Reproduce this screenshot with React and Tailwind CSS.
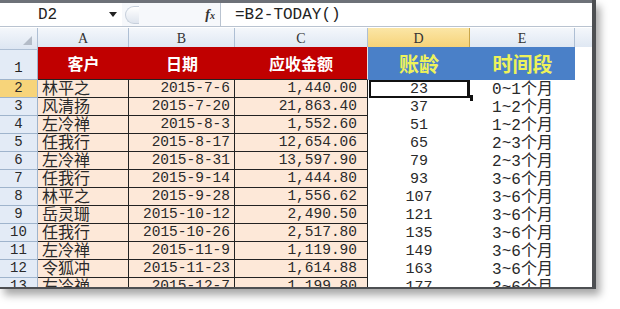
import React from "react";

const cols = "grid grid-cols-[38px_91px_106px_133px_102px_105px_1fr]";
const mono = { fontFamily: '"Liberation Mono", "Noto Sans CJK SC", monospace' };

const rows = [
	["2", "林平之", "2015-7-6", "1,440.00", "23", "0~1个月"],
	["3", "风清扬", "2015-7-20", "21,863.40", "37", "1~2个月"],
	["4", "左冷禅", "2015-8-3", "1,552.60", "51", "1~2个月"],
	["5", "任我行", "2015-8-17", "12,654.06", "65", "2~3个月"],
	["6", "左冷禅", "2015-8-31", "13,597.90", "79", "2~3个月"],
	["7", "任我行", "2015-9-14", "1,444.80", "93", "3~6个月"],
	["8", "林平之", "2015-9-28", "1,556.62", "107", "3~6个月"],
	["9", "岳灵珊", "2015-10-12", "2,490.50", "121", "3~6个月"],
	["10", "任我行", "2015-10-26", "2,517.80", "135", "3~6个月"],
	["11", "左冷禅", "2015-11-9", "1,119.90", "149", "3~6个月"],
	["12", "令狐冲", "2015-11-23", "1,614.88", "163", "3~6个月"],
	["13", "左冷禅", "2015-12-7", "1,199.80", "177", "3~6个月"],
];

const colHead = "flex items-center justify-center border-r border-b border-[#aebfd4] bg-gradient-to-b from-[#f4f7fb] to-[#dde6f2] text-[14px] text-[#333]";

function DataRow({ r }) {
	const [num, name, date, amount, age, period] = r;
	const selected = num === "2";
	return (
		<div className={`${cols} h-[18px] shrink-0 text-[14.5px] leading-[17px] text-[#2a2a2a]`} style={mono}>
			<div
				className={`flex items-center justify-center border-r border-b border-[#9fb4cc] text-[14px] ${
					selected ? "bg-[#f7d47a]" : "bg-[#e3ebf6]"
				}`}>
				{num}
			</div>
			<div className="flex items-center border-r border-b border-[#222] bg-[#fde8d8] pl-[4px] text-[16px]">
				<span className="translate-y-[1px] leading-[16px]">{name}</span>
			</div>
			<div className="flex items-center justify-end border-r border-b border-[#222] bg-[#fde8d8] pr-[4px]">{date}</div>
			<div className="flex items-center justify-end border-r border-b border-[#222] bg-[#fde8d8] pr-[10px]">{amount}</div>
			<div className="relative flex items-center justify-center bg-white text-[15px]">
				{age}
				{selected ? (
					<>
						<div className="absolute inset-0 left-[1px] border-2 border-[#111] border-r-[3px]" />
						<div className="absolute -bottom-[3px] -right-[3px] h-[6px] w-[6px] bg-[#111]" />
					</>
				) : null}
			</div>
			<div className="flex items-center justify-center bg-white text-[16px]">
				<span className="translate-y-[1px] leading-[16px]">{period}</span>
			</div>
			<div className="bg-white" />
		</div>
	);
}

export default function App() {
	return (
		<div className="h-[309px] w-[620px] overflow-hidden bg-white">
			<div className="flex h-[289px] w-[596px] flex-col overflow-hidden border-r-[4px] border-b-[2px] border-[#4d4f52] shadow-[4px_6px_8px_rgba(0,0,0,0.35)]">
				<div className="h-[3px] shrink-0 bg-[#6d7178]" />
				<div className="flex h-[24px] shrink-0 items-center border-b border-[#b9c3d0] bg-[#f6f8fb]">
					<div className="relative flex h-full w-[122px] items-center bg-white pl-[38px] text-[16px] text-[#222]" style={mono}>
						D2
						<span className="absolute right-[5px] top-[9px] h-0 w-0 border-x-[4px] border-t-[5px] border-x-transparent border-t-[#222]" />
					</div>
					<div className="ml-[3px] h-[18px] w-[14px] rounded-l-full border border-r-0 border-[#c6cfdb] bg-gradient-to-b from-white to-[#dfe5ee]" />
					<div className="ml-auto mr-[5px] text-[14px] font-bold italic text-[#333]" style={{ fontFamily: '"Liberation Serif", serif' }}>
						f<span className="text-[10px]">x</span>
					</div>
					<div className="flex h-full w-[372px] items-center border-l border-[#b9c3d0] bg-white pl-[14px] text-[16px] text-[#222]" style={mono}>
						=B2-TODAY()
					</div>
				</div>
				<div className="h-[1px] shrink-0 bg-white" />
				<div className={`${cols} h-[19px] shrink-0`} style={{ fontFamily: '"Liberation Serif", serif' }}>
					<div className="relative border-r border-b border-[#aebfd4] bg-gradient-to-b from-[#f4f7fb] to-[#dde6f2]">
						<span className="absolute bottom-[4px] right-[5px] h-0 w-0 border-b-[9px] border-l-[9px] border-b-[#b4bcc8] border-l-transparent" />
					</div>
					<div className={colHead}>A</div>
					<div className={colHead}>B</div>
					<div className={colHead}>C</div>
					<div className="flex items-center justify-center border-r border-b border-[#c9a64a] bg-gradient-to-b from-[#fbe6a6] to-[#f6d173] text-[14px] text-[#333]">D</div>
					<div className={colHead}>E</div>
					<div className="border-b border-[#aebfd4] bg-gradient-to-b from-[#f4f7fb] to-[#dde6f2]" />
				</div>
				<div className={`${cols} h-[33px] shrink-0 font-bold`} style={{ fontFamily: '"Noto Sans CJK SC", sans-serif' }}>
					<div className="flex items-end justify-center border-r border-b border-[#9fb4cc] bg-[#e3ebf6] text-[14px] font-normal text-[#222]" style={mono}>
						1
					</div>
					<div className="flex items-center justify-center border-b border-[#222] bg-[#c00000] text-[16px] text-white">客户</div>
					<div className="flex items-center justify-center border-b border-[#222] bg-[#c00000] text-[16px] text-white">日期</div>
					<div className="flex items-center justify-center border-b border-[#222] border-r border-r-[#e8e0e0] bg-[#c00000] text-[16px] text-white">应收金额</div>
					<div className="flex items-center justify-center bg-[#4a80c8] text-[20px] text-[#eef25a]">账龄</div>
					<div className="flex items-center justify-center bg-[#4a80c8] text-[20px] text-[#eef25a]">时间段</div>
					<div className="bg-white" />
				</div>
				{rows.map((r) => (
					<DataRow key={r[0]} r={r} />
				))}
			</div>
		</div>
	);
}
